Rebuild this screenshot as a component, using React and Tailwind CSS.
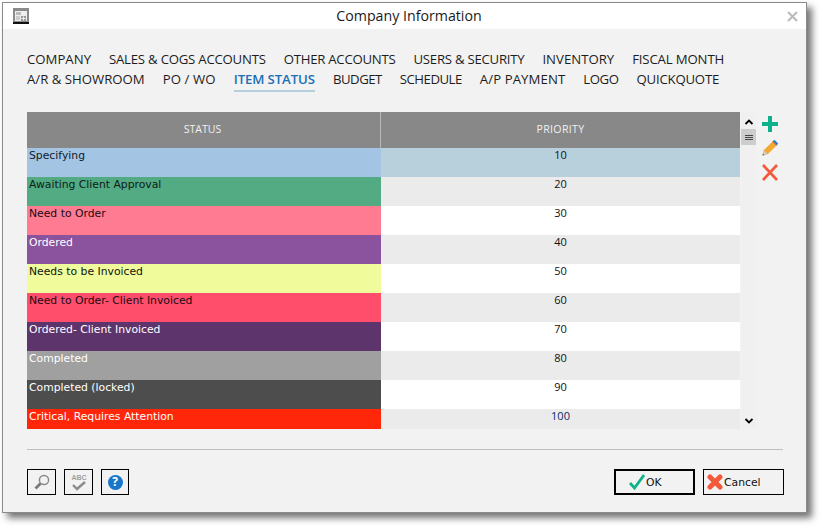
import React from 'react';

const ROWS = [
    { name: 'Specifying', priority: 10, bg: 'bg-[#a3c4e2]', text: 'text-[#10202c]', cell: 'bg-[#b8d0dc]' },
    { name: 'Awaiting Client Approval', priority: 20, bg: 'bg-[#53ab84]', text: 'text-[#0c2018]', cell: 'bg-[#ebebeb]' },
    { name: 'Need to Order', priority: 30, bg: 'bg-[#ff7b92]', text: 'text-[#200c10]', cell: 'bg-white' },
    { name: 'Ordered', priority: 40, bg: 'bg-[#8b529d]', text: 'text-white', cell: 'bg-[#ebebeb]' },
    { name: 'Needs to be Invoiced', priority: 50, bg: 'bg-[#f0fb9c]', text: 'text-[#10140c]', cell: 'bg-white' },
    { name: 'Need to Order- Client Invoiced', priority: 60, bg: 'bg-[#ff4d6c]', text: 'text-[#200c10]', cell: 'bg-[#ebebeb]' },
    { name: 'Ordered- Client Invoiced', priority: 70, bg: 'bg-[#5e346c]', text: 'text-white', cell: 'bg-white' },
    { name: 'Completed', priority: 80, bg: 'bg-[#a0a0a0]', text: 'text-white', cell: 'bg-[#ebebeb]' },
    { name: 'Completed (locked)', priority: 90, bg: 'bg-[#4d4d4d]', text: 'text-white', cell: 'bg-white' },
    { name: 'Critical, Requires Attention', priority: 100, bg: 'bg-[#ff260a]', text: 'text-white', cell: 'bg-[#ebebeb]', short: true },
];

// tracking per tab, Open Sans runs a bit wider than the original face on some words
const TABS = [
    [
        { label: 'COMPANY', track: '' },
        { label: 'SALES & COGS ACCOUNTS', track: 'tracking-[-0.23px]' },
        { label: 'OTHER ACCOUNTS', track: 'tracking-[-0.26px]' },
        { label: 'USERS & SECURITY', track: 'tracking-[-0.25px]' },
        { label: 'INVENTORY', track: '' },
        { label: 'FISCAL MONTH', track: 'tracking-[-0.15px]' },
    ],
    [
        { label: 'A/R & SHOWROOM', track: '' },
        { label: 'PO / WO', track: 'tracking-[0.1px]' },
        { label: 'ITEM STATUS', track: 'tracking-[-0.1px]' },
        { label: 'BUDGET', track: 'tracking-[-0.5px]' },
        { label: 'SCHEDULE', track: 'tracking-[-0.5px]' },
        { label: 'A/P PAYMENT', track: 'tracking-[0.08px]' },
        { label: 'LOGO', track: 'tracking-[-0.45px]' },
        { label: 'QUICKQUOTE', track: 'tracking-[-0.2px]' },
    ],
];

function TitleIcon() {
    return (
        <svg width="16" height="16" viewBox="0 0 16 16" className="ml-[10px]">
            <rect x="0" y="0" width="16" height="16" fill="#8a8a8a" />
            <rect x="0" y="14" width="16" height="2" fill="#111" />
            <rect x="2" y="3" width="12" height="10" fill="#eee" />
            <rect x="3" y="4" width="5" height="3" fill="#bbb" />
            <rect x="8" y="8" width="5" height="5" fill="#999" />
            <path d="M8.5 10.5h4M10.5 8.5v4" stroke="#eee" />
            <path d="M3 9h4M3 11h4" stroke="#aaa" />
        </svg>
    );
}

function AbcCheck() {
    return (
        <svg width="16" height="18" viewBox="0 0 16 18">
            <text x="8" y="7" textAnchor="middle" fontSize="7" fontWeight="700" fill="#a0a0a0" fontFamily="'Liberation Sans', sans-serif">ABC</text>
            <path d="M2 12l4 4 8-7" fill="none" stroke="#8c8c8c" strokeWidth="2.4" />
        </svg>
    );
}

function SearchGlyph() {
    return (
        <svg width="16" height="16" viewBox="0 0 16 16">
            <circle cx="10" cy="6" r="4.6" fill="#f2f2f2" stroke="#8a8a8a" strokeWidth="1.5" />
            <path d="M6.5 9.5L1.5 14.5" stroke="#7a7a7a" strokeWidth="2.8" />
        </svg>
    );
}

function HelpGlyph() {
    return (
        <div className="flex h-[15px] w-[15px] items-center justify-center rounded-full bg-[#1a76c8] text-[12px] font-bold leading-none text-white">?</div>
    );
}

function SideIcons() {
    return (
        <div className="ml-[6px] flex w-[17px] flex-col gap-[8px] pt-[4px]">
            <svg width="16" height="16" viewBox="0 0 16 16">
                <path d="M6 0h4v6h6v4h-6v6H6v-6H0V6h6z" fill="#0eb28a" />
            </svg>
            <svg width="16" height="16" viewBox="0 0 16 16">
                <path d="M0.5 15.5l1.2-5.2L10.8 1.2l4 4-9.1 9.1z" fill="#f5a733" />
                <path d="M0.5 15.5l1.2-5.2 4 4z" fill="#cfcfcf" />
                <path d="M0.5 15.5l.5-2.2 1.7 1.7z" fill="#777" />
                <path d="M10.8 1.2l.7-.7a1.2 1.2 0 0 1 1.7 0l2.3 2.3a1.2 1.2 0 0 1 0 1.7l-.7.7z" fill="#2a7cc0" />
                <path d="M10.5 1.5l4 4" stroke="#ef5a30" />
            </svg>
            <svg width="16" height="17" viewBox="0 0 16 17">
                <path d="M1 1l14 15M15 1L1 16" stroke="#f4593b" strokeWidth="2.6" />
            </svg>
        </div>
    );
}

function Scrollbar() {
    return (
        <div className="ml-px flex w-[15px] flex-col items-center bg-[#f0f0f0]">
            <svg width="10" height="12" viewBox="0 0 10 12" className="mt-[4px]">
                <path d="M1.5 8L5 4.5 8.5 8" fill="none" stroke="#000" strokeWidth="1.8" />
            </svg>
            <div className="mt-[1px] flex h-[16px] w-[15px] flex-col items-center justify-center gap-[1px] bg-[#cdcdcd]">
                <div className="h-px w-[8px] bg-[#444]" />
                <div className="h-px w-[8px] bg-[#444]" />
                <div className="h-px w-[8px] bg-[#444]" />
            </div>
            <svg width="10" height="12" viewBox="0 0 10 12" className="mt-auto mb-[2px]">
                <path d="M1.5 4L5 7.5 8.5 4" fill="none" stroke="#000" strokeWidth="1.8" />
            </svg>
        </div>
    );
}

export default function App() {
    return (
        <div className="h-[527px] w-[821px] bg-white pl-[2px] pt-[2px] font-['Open_Sans',sans-serif]">
            <div className="flex h-[511px] w-[805px] flex-col border border-[#8a8a8a] bg-[#f2f2f2] shadow-[5px_5px_7px_rgba(0,0,0,0.55)]">
                <div className="relative flex h-[26px] items-center bg-white">
                    <TitleIcon />
                    <div className="absolute inset-x-0 pl-[9px] text-center text-[14.2px] text-[#1a1a1a]">Company Information</div>
                    <svg width="11" height="11" viewBox="0 0 11 11" className="ml-auto mr-[8px]">
                        <path d="M1 1l9 9M10 1l-9 9" stroke="#bdbdbd" strokeWidth="2.2" />
                    </svg>
                </div>

                <div className="flex flex-1 flex-col pl-[24px] pr-[22px]">
                    <div className="mt-[20px] flex flex-col">
                        {TABS.map((row, i) => (
                            <div key={i} className="flex h-[20px] gap-[18px]">
                                {row.map(tab => (
                                    <div
                                        key={tab.label}
                                        className={tab.label === 'ITEM STATUS'
                                            ? `h-[23px] border-b-2 border-[#b5cfdd] text-[13.2px] font-semibold leading-[20px] text-[#1a6fb5] ${tab.track}`
                                            : `text-[13.2px] leading-[20px] text-[#1c1c1c] ${tab.track}`}
                                    >
                                        {tab.label}
                                    </div>
                                ))}
                            </div>
                        ))}
                    </div>

                    <div className="mt-[23px] flex h-[317px]">
                        <div className="flex w-[713px] flex-col overflow-hidden">
                            <div className="flex h-[36px] flex-none bg-[#888888] text-[10.6px] text-[#f0f0f0]">
                                <div className="flex w-[353px] items-center justify-center pr-[2px]">STATUS</div>
                                <div className="w-px bg-[#b8b8b8]" />
                                <div className="flex flex-1 items-center justify-center tracking-[0.35px]">PRIORITY</div>
                            </div>
                            {ROWS.map(row => (
                                <div key={row.priority} className={row.short ? 'flex h-[20px] flex-none' : 'flex h-[29px] flex-none'}>
                                    <div className={`w-[354px] pl-[2px] font-['DejaVu_Sans',sans-serif] text-[10.8px] leading-[16px] ${row.bg} ${row.text}`}>
                                        {row.name}
                                    </div>
                                    <div className={`flex-1 text-center text-[11px] leading-[14px] ${row.short ? 'text-[#0c2a66]' : 'text-[#111]'} ${row.cell}`}>
                                        {row.priority}
                                    </div>
                                </div>
                            ))}
                        </div>
                        <Scrollbar />
                        <SideIcons />
                    </div>

                    <div className="mt-[20px] h-px w-[756px] bg-[#bfbfbf]" />

                    <div className="mt-[19px] flex w-[757px]">
                        <button className="flex h-[26px] w-[29px] items-center justify-center border border-black"><SearchGlyph /></button>
                        <button className="ml-[8px] flex h-[26px] w-[29px] items-center justify-center border border-black"><AbcCheck /></button>
                        <button className="ml-[8px] flex h-[26px] w-[28px] items-center justify-center border border-black"><HelpGlyph /></button>
                        <button className="ml-auto flex h-[26px] w-[81px] items-center border-2 border-black pl-[13px] font-['DejaVu_Sans',sans-serif] text-[10.8px] text-[#111]">
                            <svg width="16" height="16" viewBox="0 0 16 16">
                                <path d="M1 9l4.5 5L15 1" fill="none" stroke="#0eb28a" strokeWidth="2.8" />
                            </svg>
                            <span className="ml-[1px] pt-[3px]">OK</span>
                        </button>
                        <button className="ml-[8px] flex h-[26px] w-[81px] items-center border border-black pl-[3px] font-['DejaVu_Sans',sans-serif] text-[10.8px] text-[#111]">
                            <svg width="16" height="16" viewBox="0 0 16 16">
                                <path d="M3 3l10 10M13 3L3 13" stroke="#f4593b" strokeWidth="5" strokeLinecap="round" />
                            </svg>
                            <span className="ml-[1px] pt-[3px]">Cancel</span>
                        </button>
                    </div>
                </div>
            </div>
        </div>
    );
}
